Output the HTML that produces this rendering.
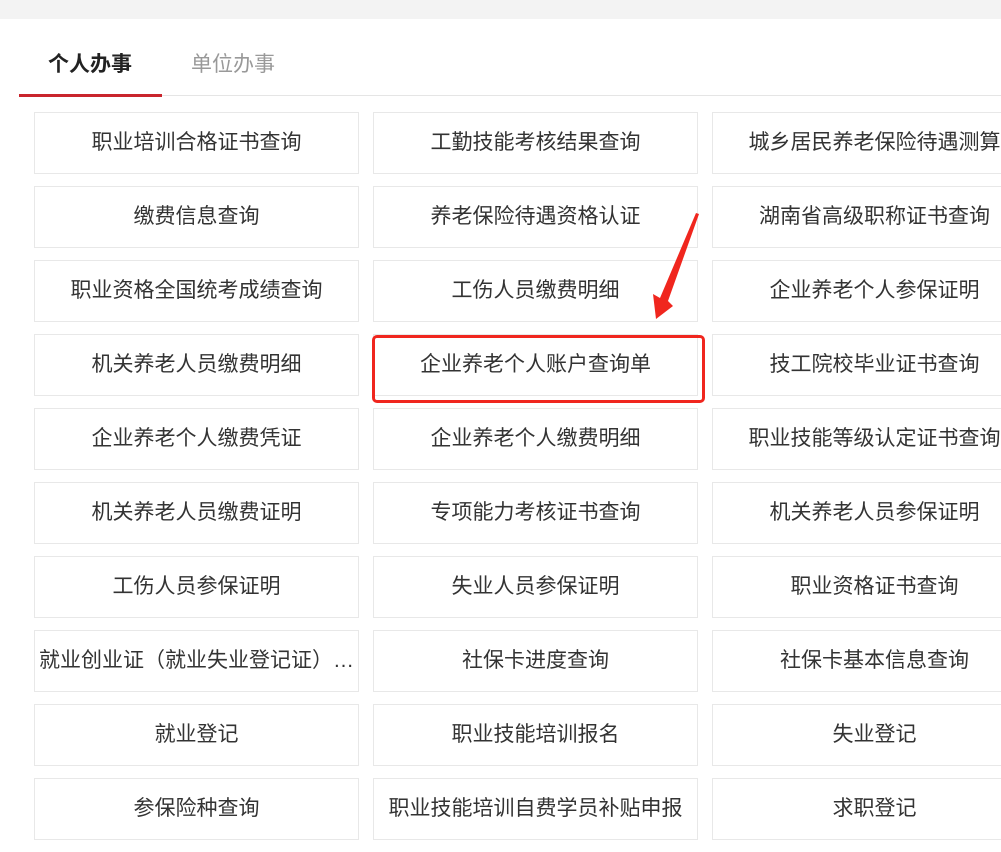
<!DOCTYPE html>
<html><head><meta charset="utf-8"><style>
html,body{margin:0;padding:0;width:1001px;height:852px;overflow:hidden;background:#fff;font-family:"Liberation Sans","Noto Sans CJK SC",sans-serif;}
.top{position:absolute;left:0;top:0;width:1001px;height:19px;background:#f3f3f3;}
.tab{position:absolute;top:51px;font-size:21px;line-height:28px;}
.t1{left:48px;color:#222;font-weight:bold;}
.t2{left:191px;color:#999;}
.line{position:absolute;left:19px;top:95px;width:982px;height:1px;background:#e5e5e5;}
.red{position:absolute;left:19px;top:94px;width:143px;height:3px;background:#c9252d;}
.cell{position:absolute;width:323px;height:60px;border:1px solid #e8e8e8;box-sizing:content-box;text-align:center;line-height:60px;font-size:21px;color:#333;white-space:nowrap;overflow:hidden;text-overflow:ellipsis;}
.hl{position:absolute;left:372px;top:335px;width:327px;height:62px;border:3px solid #f0261e;border-radius:5px;}
</style></head><body>
<div class="top"></div>
<div class="tab t1">个人办事</div><div class="tab t2">单位办事</div>
<div class="line"></div><div class="red"></div>
<div class="cell" style="left:34px;top:112px">职业培训合格证书查询</div>
<div class="cell" style="left:373px;top:112px">工勤技能考核结果查询</div>
<div class="cell" style="left:712px;top:112px;text-overflow:clip">城乡居民养老保险待遇测算</div>
<div class="cell" style="left:34px;top:186px">缴费信息查询</div>
<div class="cell" style="left:373px;top:186px">养老保险待遇资格认证</div>
<div class="cell" style="left:712px;top:186px">湖南省高级职称证书查询</div>
<div class="cell" style="left:34px;top:260px">职业资格全国统考成绩查询</div>
<div class="cell" style="left:373px;top:260px">工伤人员缴费明细</div>
<div class="cell" style="left:712px;top:260px">企业养老个人参保证明</div>
<div class="cell" style="left:34px;top:334px">机关养老人员缴费明细</div>
<div class="cell" style="left:373px;top:334px">企业养老个人账户查询单</div>
<div class="cell" style="left:712px;top:334px">技工院校毕业证书查询</div>
<div class="cell" style="left:34px;top:408px">企业养老个人缴费凭证</div>
<div class="cell" style="left:373px;top:408px">企业养老个人缴费明细</div>
<div class="cell" style="left:712px;top:408px;text-overflow:clip">职业技能等级认定证书查询</div>
<div class="cell" style="left:34px;top:482px">机关养老人员缴费证明</div>
<div class="cell" style="left:373px;top:482px">专项能力考核证书查询</div>
<div class="cell" style="left:712px;top:482px">机关养老人员参保证明</div>
<div class="cell" style="left:34px;top:556px">工伤人员参保证明</div>
<div class="cell" style="left:373px;top:556px">失业人员参保证明</div>
<div class="cell" style="left:712px;top:556px">职业资格证书查询</div>
<div class="cell" style="left:34px;top:630px">就业创业证（就业失业登记证）…</div>
<div class="cell" style="left:373px;top:630px">社保卡进度查询</div>
<div class="cell" style="left:712px;top:630px">社保卡基本信息查询</div>
<div class="cell" style="left:34px;top:704px">就业登记</div>
<div class="cell" style="left:373px;top:704px">职业技能培训报名</div>
<div class="cell" style="left:712px;top:704px">失业登记</div>
<div class="cell" style="left:34px;top:778px">参保险种查询</div>
<div class="cell" style="left:373px;top:778px">职业技能培训自费学员补贴申报</div>
<div class="cell" style="left:712px;top:778px">求职登记</div>
<div class="hl"></div>
<svg style="position:absolute;left:0;top:0" width="1001" height="852"><polygon points="699,214 668,301 673,306 656,319 653,294 660,298 696,213" fill="#f0261e"/></svg>
</body></html>
